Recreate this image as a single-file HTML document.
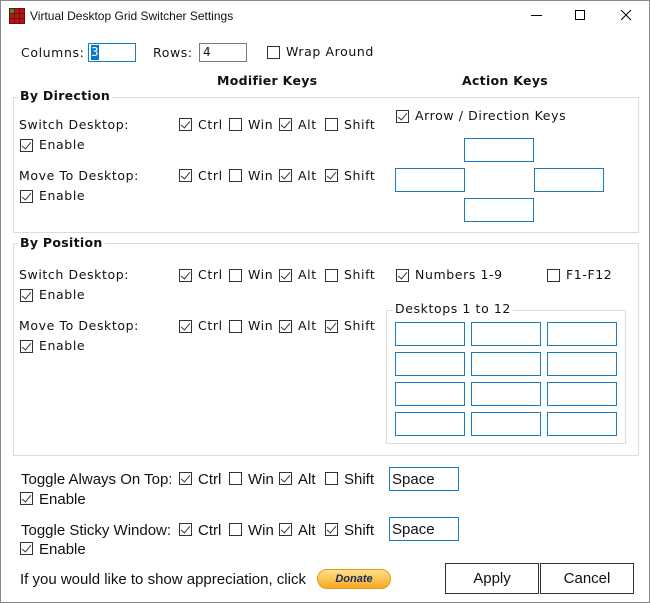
<!DOCTYPE html>
<html><head><meta charset="utf-8"><style>
*{margin:0;padding:0;box-sizing:border-box}
body{width:650px;height:603px;background:#fff;position:relative;overflow:hidden;font-family:"DejaVu Sans","Liberation Sans",sans-serif;font-size:12.5px;color:#111}
.a{position:absolute;white-space:nowrap;line-height:16px}
.v{font-family:"DejaVu Sans",sans-serif;font-size:12.5px;letter-spacing:0.6px}
.s{font-family:"Liberation Sans",sans-serif;font-size:15px;margin-top:2px}
.b{font-weight:bold;letter-spacing:0.3px}
.cb{position:absolute;width:13px;height:13px;border:1px solid #333;background:#fff}
.cb.c::after{content:"";position:absolute;left:3px;top:0px;width:4px;height:8px;border:solid #333;border-width:0 1px 1px 0;transform:rotate(40deg)}
.in{position:absolute;border:1px solid #1a7ac4;background:#fff}
.g{position:absolute;border:1px solid #dcdcdc}
.gt{position:absolute;background:#fff;padding:0 2px;line-height:16px}
.btn{position:absolute;border:1px solid #333;background:#fff;text-align:center;line-height:30px;font-family:"Liberation Sans",sans-serif;font-size:15px}
</style></head><body>
<div style="position:absolute;left:0;top:0;width:650px;height:603px;border:1px solid #888"></div>
<svg class="a" style="left:9px;top:8px" width="16" height="16"><rect width="16" height="16" fill="#7a0a0a"/><g fill="#b01818"><rect x="1" y="1" width="4" height="4"/><rect x="6" y="1" width="4" height="4"/><rect x="11" y="1" width="4" height="4"/><rect x="1" y="6" width="4" height="4"/><rect x="6" y="6" width="4" height="4"/><rect x="11" y="6" width="4" height="4"/><rect x="1" y="11" width="4" height="4"/><rect x="6" y="11" width="4" height="4"/><rect x="11" y="11" width="4" height="4"/></g><rect x="1" y="1" width="4" height="4" fill="#2a9a2a"/></svg>
<div class="a" style="left:30px;top:8px;font-size:12px;font-family:'Liberation Sans',sans-serif">Virtual Desktop Grid Switcher Settings</div>
<div class="a" style="left:531px;top:15px;width:11px;height:1px;background:#000"></div>
<div class="a" style="left:575px;top:10px;width:10px;height:10px;border:1px solid #000"></div>
<svg class="a" style="left:620px;top:9px" width="12" height="12"><path d="M1 1L11 11M11 1L1 11" stroke="#000" stroke-width="1"/></svg>

<div class="a v" style="left:21px;top:45px">Columns:</div>
<div class="in" style="left:88px;top:43px;width:48px;height:19px"><span style="position:absolute;left:2px;top:1px;background:#0078d7;color:#fff;line-height:15px;font-size:12px">3</span></div>
<div class="a v" style="left:153px;top:45px">Rows:</div>
<div class="in" style="left:199px;top:43px;width:48px;height:19px;border-color:#7a7a7a"><span style="position:absolute;left:3px;top:1px;line-height:15px;font-size:12px">4</span></div>
<div class="cb" style="left:267px;top:46px"></div>
<div class="a v" style="left:286px;top:44px">Wrap Around</div>
<div class="a v b" style="left:217px;top:73px">Modifier Keys</div>
<div class="a v b" style="left:462px;top:73px">Action Keys</div>

<div class="g" style="left:13px;top:97px;width:626px;height:136px"></div>
<div class="gt v b" style="left:18px;top:88px">By Direction</div>

<div class="g" style="left:13px;top:243px;width:626px;height:213px"></div>
<div class="gt v b" style="left:18px;top:235px">By Position</div>

<div class="a v" style="left:19px;top:117px">Switch Desktop:</div>
<div class="cb c" style="left:179px;top:118px"></div><div class="a v" style="left:198px;top:117px">Ctrl</div>
<div class="cb" style="left:229px;top:118px"></div><div class="a v" style="left:248px;top:117px">Win</div>
<div class="cb c" style="left:279px;top:118px"></div><div class="a v" style="left:298px;top:117px">Alt</div>
<div class="cb" style="left:325px;top:118px"></div><div class="a v" style="left:344px;top:117px">Shift</div>
<div class="cb c" style="left:20px;top:139px"></div><div class="a v" style="left:39px;top:137px">Enable</div>

<div class="a v" style="left:19px;top:168px">Move To Desktop:</div>
<div class="cb c" style="left:179px;top:169px"></div><div class="a v" style="left:198px;top:168px">Ctrl</div>
<div class="cb" style="left:229px;top:169px"></div><div class="a v" style="left:248px;top:168px">Win</div>
<div class="cb c" style="left:279px;top:169px"></div><div class="a v" style="left:298px;top:168px">Alt</div>
<div class="cb c" style="left:325px;top:169px"></div><div class="a v" style="left:344px;top:168px">Shift</div>
<div class="cb c" style="left:20px;top:190px"></div><div class="a v" style="left:39px;top:188px">Enable</div>

<div class="cb c" style="left:396px;top:110px"></div><div class="a v" style="left:415px;top:108px">Arrow / Direction Keys</div>
<div class="in" style="left:464px;top:138px;width:70px;height:24px"></div>
<div class="in" style="left:395px;top:168px;width:70px;height:24px"></div>
<div class="in" style="left:534px;top:168px;width:70px;height:24px"></div>
<div class="in" style="left:464px;top:198px;width:70px;height:24px"></div>

<div class="a v" style="left:19px;top:267px">Switch Desktop:</div>
<div class="cb c" style="left:179px;top:269px"></div><div class="a v" style="left:198px;top:267px">Ctrl</div>
<div class="cb" style="left:229px;top:269px"></div><div class="a v" style="left:248px;top:267px">Win</div>
<div class="cb c" style="left:279px;top:269px"></div><div class="a v" style="left:298px;top:267px">Alt</div>
<div class="cb" style="left:325px;top:269px"></div><div class="a v" style="left:344px;top:267px">Shift</div>
<div class="cb c" style="left:20px;top:289px"></div><div class="a v" style="left:39px;top:287px">Enable</div>

<div class="a v" style="left:19px;top:318px">Move To Desktop:</div>
<div class="cb c" style="left:179px;top:320px"></div><div class="a v" style="left:198px;top:318px">Ctrl</div>
<div class="cb" style="left:229px;top:320px"></div><div class="a v" style="left:248px;top:318px">Win</div>
<div class="cb c" style="left:279px;top:320px"></div><div class="a v" style="left:298px;top:318px">Alt</div>
<div class="cb c" style="left:325px;top:320px"></div><div class="a v" style="left:344px;top:318px">Shift</div>
<div class="cb c" style="left:20px;top:340px"></div><div class="a v" style="left:39px;top:338px">Enable</div>

<div class="cb c" style="left:396px;top:269px"></div><div class="a v" style="left:415px;top:267px">Numbers 1-9</div>
<div class="cb" style="left:547px;top:269px"></div><div class="a v" style="left:566px;top:267px">F1-F12</div>

<div class="g" style="left:386px;top:310px;width:240px;height:134px"></div>
<div class="gt v" style="left:393px;top:301px">Desktops 1 to 12</div>
<div class="in" style="left:395px;top:322px;width:70px;height:24px"></div><div class="in" style="left:471px;top:322px;width:70px;height:24px"></div><div class="in" style="left:547px;top:322px;width:70px;height:24px"></div>
<div class="in" style="left:395px;top:352px;width:70px;height:24px"></div><div class="in" style="left:471px;top:352px;width:70px;height:24px"></div><div class="in" style="left:547px;top:352px;width:70px;height:24px"></div>
<div class="in" style="left:395px;top:382px;width:70px;height:24px"></div><div class="in" style="left:471px;top:382px;width:70px;height:24px"></div><div class="in" style="left:547px;top:382px;width:70px;height:24px"></div>
<div class="in" style="left:395px;top:412px;width:70px;height:24px"></div><div class="in" style="left:471px;top:412px;width:70px;height:24px"></div><div class="in" style="left:547px;top:412px;width:70px;height:24px"></div>

<div class="a s" style="left:21px;top:470px">Toggle Always On Top:</div>
<div class="cb c" style="left:179px;top:472px"></div><div class="a s" style="left:198px;top:470px">Ctrl</div>
<div class="cb" style="left:229px;top:472px"></div><div class="a s" style="left:248px;top:470px">Win</div>
<div class="cb c" style="left:279px;top:472px"></div><div class="a s" style="left:298px;top:470px">Alt</div>
<div class="cb" style="left:325px;top:472px"></div><div class="a s" style="left:344px;top:470px">Shift</div>
<div class="in" style="left:389px;top:467px;width:70px;height:24px"><span class="a s" style="left:2px;top:2px">Space</span></div>
<div class="cb c" style="left:20px;top:492px"></div><div class="a s" style="left:39px;top:490px">Enable</div>

<div class="a s" style="left:21px;top:521px">Toggle Sticky Window:</div>
<div class="cb c" style="left:179px;top:523px"></div><div class="a s" style="left:198px;top:521px">Ctrl</div>
<div class="cb" style="left:229px;top:523px"></div><div class="a s" style="left:248px;top:521px">Win</div>
<div class="cb c" style="left:279px;top:523px"></div><div class="a s" style="left:298px;top:521px">Alt</div>
<div class="cb c" style="left:325px;top:523px"></div><div class="a s" style="left:344px;top:521px">Shift</div>
<div class="in" style="left:389px;top:517px;width:70px;height:24px"><span class="a s" style="left:2px;top:2px">Space</span></div>
<div class="cb c" style="left:20px;top:542px"></div><div class="a s" style="left:39px;top:540px">Enable</div>

<div class="a s" style="left:20px;top:570px">If you would like to show appreciation, click</div>
<div class="a" style="left:317px;top:569px;width:74px;height:20px;border-radius:10px;background:linear-gradient(#ffe08a,#f7a823);border:1px solid #e59a1a;text-align:center;font:italic bold 11px 'Liberation Sans',sans-serif;line-height:18px;color:#1a2a5a">Donate</div>
<div class="btn" style="left:445px;top:563px;width:94px;height:31px">Apply</div>
<div class="btn" style="left:540px;top:563px;width:94px;height:31px">Cancel</div>
</body></html>
